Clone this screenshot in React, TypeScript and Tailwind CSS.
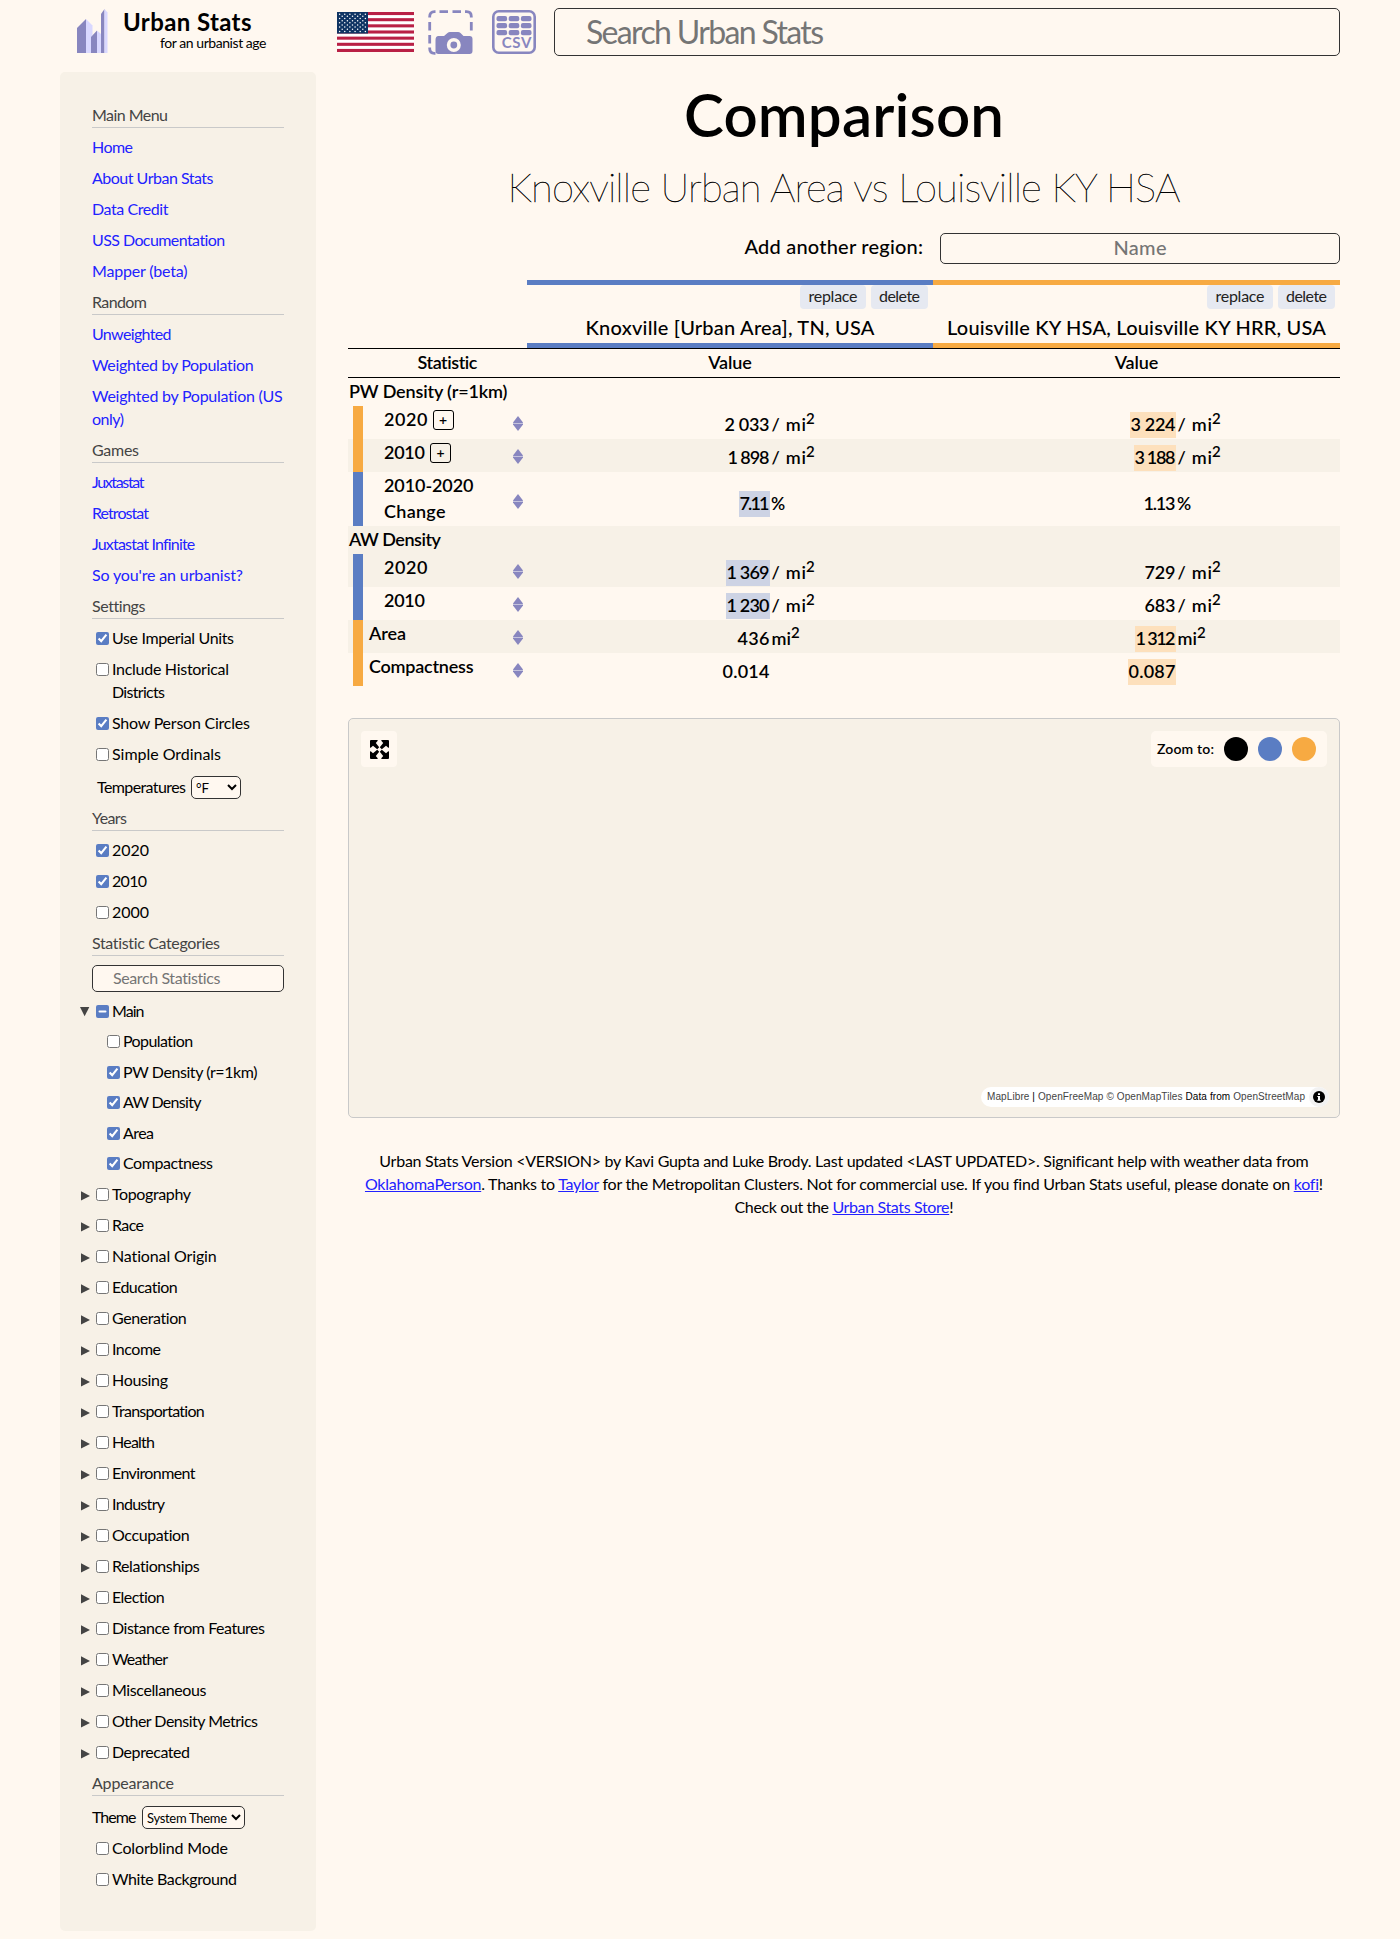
import { useLayoutEffect, useRef } from 'react'
import type { ReactNode } from 'react'

/** Single line of text whose tracking is adjusted so that it spans `w` pixels. */
function Fit({ w, flat = false, className = '', children }: { w: number; flat?: boolean; className?: string; children: ReactNode }) {
  const ref = useRef<HTMLSpanElement>(null)
  useLayoutEffect(() => {
    const el = ref.current
    if (!el) return
    const apply = () => {
      el.style.letterSpacing = '0px'
      el.style.marginRight = '0px'
      const n = (el.textContent ?? '').length
      if (n < 2) return
      const spacing = (w - el.getBoundingClientRect().width) / (n - 1)
      el.style.letterSpacing = `${spacing}px`
      el.style.marginRight = `${-spacing}px`
    }
    apply()
    document.fonts?.ready.then(apply)
  }, [w])
  return (
    <span ref={ref} className={`inline-block whitespace-nowrap ${flat ? '' : '-translate-y-px'} ${className}`}>
      {children}
    </span>
  )
}

function Logo() {
  return (
    <svg width="31" height="44" viewBox="0 0 31 44" className="shrink-0">
      <path d="M0 19 9 10V44H0Z" fill="#8886bf" />
      <path d="M9 10 15.5 16.500V44H9Z" fill="#d9d8ff" />
      <path d="M14 28 20 21.500V44H14Z" fill="#8886bf" />
      <path d="M20 21.500 24 25V44H20Z" fill="#d9d8ff" />
      <path d="M24 5 27.500 0V44H24Z" fill="#8886bf" />
      <path d="M27.500 0 30.500 3.500V44H27.500Z" fill="#d9d8ff" />
    </svg>
  )
}

function Flag() {
  const stars: { x: number; y: number }[] = []
  for (let r = 0; r < 9; r++) {
    const count = r % 2 === 0 ? 6 : 5
    for (let c = 0; c < count; c++) {
      stars.push({ x: (r % 2 === 0 ? 2.6 : 5.2) + c * 5.15, y: 2.2 + r * 2.15 })
    }
  }
  return (
    <svg width="77" height="40" viewBox="0 0 77 40" className="shrink-0">
      <rect width="77" height="40" fill="#fff" />
      {[0, 2, 4, 6, 8, 10, 12].map((i) => (
        <rect key={i} y={(i * 40) / 13} width="77" height={40 / 13} fill="#b92045" />
      ))}
      <rect width="31" height="21.540" fill="#0f3463" />
      {stars.map((s) => (
        <circle key={`${s.x}-${s.y}`} cx={s.x} cy={s.y} r="0.75" fill="#fff" />
      ))}
    </svg>
  )
}

function CameraIcon() {
  return (
    <svg width="45" height="45" viewBox="0 0 45 45" className="shrink-0">
      <g fill="none" stroke="#8886bf" strokeWidth="2.800">
        <path d="M1.700 7.500V6.500Q1.700 1.700 6.500 1.700H7.500" />
        <path d="M37 1.700H38.500Q43.300 1.700 43.300 6.500V7.500" />
        <path d="M11.500 1.700H20M24.500 1.700H33" />
        <path d="M1.700 12V20.500M1.700 25V33.500M43.300 12V20.500" />
        <path d="M1.700 37.500V38.500Q1.700 43.300 6.500 43.300H7.500" />
      </g>
      <path
        d="M7.500 30Q7.500 26 10.500 26H16L19.500 23Q20.500 22 22 22H30Q31.500 22 32.500 23L35.500 26H41.500Q44.500 26 44.500 29V41Q44.500 44 41.500 44H10.500Q7.500 44 7.500 41Z"
        fill="#8886bf"
      />
      <circle cx="25.800" cy="35" r="7" fill="#fff8f0" />
      <circle cx="25.800" cy="35" r="3.400" fill="#8886bf" />
    </svg>
  )
}

function CsvIcon() {
  return (
    <svg width="44" height="44" viewBox="0 0 44 44" className="shrink-0">
      <rect x="1.300" y="1.300" width="41.400" height="41.400" rx="5.500" fill="none" stroke="#8886bf" strokeWidth="2.600" />
      {[6, 13, 20].map((y) =>
        [4.500, 16.700, 28.900].map((x) => (
          <rect key={`${x}-${y}`} x={x} y={y} width="10.600" height="5.200" rx="2" fill="#8886bf" />
        )),
      )}
      <text
        x="9.800"
        y="38"
        textLength="29.500"
        fontSize="15"
        fontWeight="700"
        fontFamily="Lato, sans-serif"
        fill="#8886bf"
      >
        CSV
      </text>
    </svg>
  )
}

function SortIcon() {
  return (
    <svg width="10" height="15" viewBox="0 0 10 15">
      <path d="M5 0 10 6.500V8.500L5 15 0 8.500V6.500Z" fill="#8886bf" />
      <rect y="7" width="10" height="1" fill="#c5c3dd" />
    </svg>
  )
}

function ExpandIcon() {
  return (
    <svg width="19" height="19" viewBox="0 0 19 19" fill="#000">
      {[0, 90, 180, 270].map((a) => (
        <g key={a} transform={`rotate(${a} 9.500 9.500)`}>
          <path d="M1 0H7.200Q8.300 0 7.500 1L5.800 3 9.200 7.200 7.200 9.200 3 5.800 1 7.500Q0 8.300 0 7.200V1Q0 0 1 0Z" />
        </g>
      ))}
    </svg>
  )
}

function Heading({ text, w }: { text: string; w: number }) {
  return (
    <div className="mb-2 h-6 border-b border-[#c9c9c9] leading-[23px] text-[#444444]">
      <Fit w={w}>{text}</Fit>
    </div>
  )
}

function MenuLink({ lines }: { lines: [string, number][] }) {
  return (
    <a href="#" className="mb-2 flex flex-col items-start leading-[23px] text-[#2222ff]">
      {lines.map(([t, w]) => (
        <Fit key={t} w={w}>
          {t}
        </Fit>
      ))}
    </a>
  )
}

type Check = 'on' | 'off' | 'mixed'

function CheckRow({ lines, state = 'off' }: { lines: [string, number][]; state?: Check }) {
  return (
    <label className="flex items-start gap-[3px] pl-1 leading-[23px]">
      <input
        type="checkbox"
        defaultChecked={state === 'on'}
        ref={(el) => {
          if (el) el.indeterminate = state === 'mixed'
        }}
        className="mt-[5px] size-[13px] shrink-0 accent-[#5a7dc3]"
      />
      <span className="flex flex-col items-start">
        {lines.map(([t, w]) => (
          <Fit key={t} w={w}>
            {t}
          </Fit>
        ))}
      </span>
    </label>
  )
}

function Triangle({ open = false }: { open?: boolean }) {
  return (
    <svg width="10" height="10" viewBox="0 0 10 10" className={open ? 'mt-[7px] -ml-[0.500px] mr-[0.500px] shrink-0' : 'mt-2 shrink-0'}>
      <path d={open ? 'M0 0H9.300L4.650 9.300Z' : 'M1 0.200 10 4.900 1 9.600Z'} fill="#444444" />
    </svg>
  )
}

const categories: [string, number][] = [
  ['Topography', 79],
  ['Race', 32],
  ['National Origin', 105],
  ['Education', 66],
  ['Generation', 75],
  ['Income', 49],
  ['Housing', 56],
  ['Transportation', 93],
  ['Health', 43],
  ['Environment', 83.5],
  ['Industry', 53],
  ['Occupation', 78],
  ['Relationships', 88],
  ['Election', 53],
  ['Distance from Features', 153],
  ['Weather', 56],
  ['Miscellaneous', 94.5],
  ['Other Density Metrics', 146],
  ['Deprecated', 78],
]

const mainStats: [string, number, Check][] = [
  ['Population', 70.5, 'off'],
  ['PW Density (r=1km)', 134.5, 'on'],
  ['AW Density', 78.5, 'on'],
  ['Area', 31, 'on'],
  ['Compactness', 90, 'on'],
]

function Sidebar() {
  return (
    <aside className="h-[1859px] w-64 shrink-0 rounded-[5px] bg-[#f7f1e7] px-8 pt-8 text-base">
      <Heading text="Main Menu" w={76} />
      <MenuLink lines={[['Home', 41]]} />
      <MenuLink lines={[['About Urban Stats', 121.5]]} />
      <MenuLink lines={[['Data Credit', 76.5]]} />
      <MenuLink lines={[['USS Documentation', 133.5]]} />
      <MenuLink lines={[['Mapper (beta)', 95.5]]} />
      <Heading text="Random" w={55} />
      <MenuLink lines={[['Unweighted', 79.5]]} />
      <MenuLink lines={[['Weighted by Population', 162]]} />
      <MenuLink
        lines={[
          ['Weighted by Population (US', 191],
          ['only)', 32],
        ]}
      />
      <Heading text="Games" w={47} />
      <MenuLink lines={[['Juxtastat', 52.5]]} />
      <MenuLink lines={[['Retrostat', 57]]} />
      <MenuLink lines={[['Juxtastat Infinite', 103]]} />
      <MenuLink lines={[["So you're an urbanist?", 151]]} />
      <Heading text="Settings" w={53} />
      <div className="flex flex-col gap-2">
        <CheckRow lines={[['Use Imperial Units', 122]]} state="on" />
        <CheckRow
          lines={[
            ['Include Historical', 117],
            ['Districts', 53],
          ]}
        />
        <CheckRow lines={[['Show Person Circles', 138]]} state="on" />
        <CheckRow lines={[['Simple Ordinals', 109]]} />
      </div>
      <div className="mt-2 flex h-[33px] items-start pl-[5px]">
        <Fit w={89} flat className="mt-px leading-[23px]">
          Temperatures
        </Fit>
        <select className="mt-[2px] ml-[5px] h-[23px] w-[50px] rounded-[5px] border border-[#333] bg-[#fff8f0] text-[13.333px]">
          <option>°F</option>
        </select>
      </div>
      <Heading text="Years" w={35} />
      <div className="mb-2 flex flex-col gap-2">
        <CheckRow lines={[['2020', 37]]} state="on" />
        <CheckRow lines={[['2010', 35]]} state="on" />
        <CheckRow lines={[['2000', 37]]} />
      </div>
      <Heading text="Statistic Categories" w={128.5} />
      <div className="mt-[9px] h-[27px] rounded-[5px] border border-[#333] bg-[#fff8f0] pl-5 leading-[24px] text-[#757575]">
        <Fit w={108} flat>
          Search Statistics
        </Fit>
      </div>
      <div className="mt-2 -ml-3 flex">
        <Triangle open />
        <div className="ml-0.5">
          <CheckRow lines={[['Main', 32.5]]} state="mixed" />
        </div>
      </div>
      <div className="mt-[7px] ml-[11px] flex h-[153px] flex-col gap-[7.6px]">
        {mainStats.map(([t, w, s]) => (
          <CheckRow key={t} lines={[[t, w]]} state={s} />
        ))}
      </div>
      <div className="mb-2 -ml-3 flex flex-col gap-2">
        {categories.map(([t, w]) => (
          <div key={t} className="flex">
            <Triangle />
            <div className="ml-0.5">
              <CheckRow lines={[[t, w]]} />
            </div>
          </div>
        ))}
      </div>
      <Heading text="Appearance" w={82} />
      <div className="flex h-[33px] items-start">
        <Fit w={44.5} className="mt-[2px] leading-[23px]">
          Theme
        </Fit>
        <select className="mt-[2px] ml-[5.500px] h-[23px] w-[103px] rounded-[5px] border border-[#333] bg-[#fff8f0] text-[13px] tracking-[-0.300px]">
          <option>System Theme</option>
        </select>
      </div>
      <div className="flex flex-col gap-2">
        <CheckRow lines={[['Colorblind Mode', 116]]} />
        <CheckRow lines={[['White Background', 125]]} />
      </div>
    </aside>
  )
}

type Cell = { n: string; w: number; hl?: boolean; unit?: '/ mi' | 'mi' | '%' }
type Row = { name: [string, number][]; plus?: boolean; indent?: boolean; bar: 'blue' | 'orange'; shade?: boolean; cells: [Cell, Cell] }

const pwRows: Row[] = [
  { name: [['2020', 43.5]], plus: true, indent: true, bar: 'orange', cells: [{ n: '2 033', w: 45, unit: '/ mi' }, { n: '3 224', w: 45, hl: true, unit: '/ mi' }] },
  { name: [['2010', 41]], plus: true, indent: true, bar: 'orange', shade: true, cells: [{ n: '1 898', w: 42, unit: '/ mi' }, { n: '3 188', w: 41, hl: true, unit: '/ mi' }] },
  { name: [['2010-2020', 89.5], ['Change', 61.5]], indent: true, bar: 'blue', cells: [{ n: '7.11', w: 30, hl: true, unit: '%' }, { n: '1.13', w: 32, unit: '%' }] },
]

const awRows: Row[] = [
  { name: [['2020', 43.5]], indent: true, bar: 'blue', shade: true, cells: [{ n: '1 369', w: 43, hl: true, unit: '/ mi' }, { n: '729', w: 31, unit: '/ mi' }] },
  { name: [['2010', 41]], indent: true, bar: 'blue', cells: [{ n: '1 230', w: 43, hl: true, unit: '/ mi' }, { n: '683', w: 31, unit: '/ mi' }] },
  { name: [['Area', 37]], bar: 'orange', shade: true, cells: [{ n: '436', w: 32, unit: 'mi' }, { n: '1 312', w: 40, hl: true, unit: 'mi' }] },
  { name: [['Compactness', 104.5]], bar: 'orange', cells: [{ n: '0.014', w: 47 }, { n: '0.087', w: 47, hl: true }] },
]

const unitWidth = { '/ mi': 34.5, mi: 19.5, '%': 14 }

function ValueCell({ cell, orange }: { cell: Cell; orange?: boolean }) {
  return (
    <div className="flex items-end pb-px">
      <div className="flex w-[243px] justify-end">
        <span className={`h-[26px] px-[0.500px] leading-[26px] ${cell.hl ? (orange ? 'bg-[#fde0bc]' : 'bg-[#cdd3e4]') : ''}`}>
          <Fit w={cell.w}>{cell.n}</Fit>
        </span>
      </div>
      {cell.unit && (
        <span className={`flex h-[26px] leading-[26px] ${cell.unit === '%' ? 'pl-px' : 'pl-[1.500px]'}`}>
          {cell.unit === '%' ? <span className="text-[17.500px]">%</span> : <Fit w={unitWidth[cell.unit]}>{cell.unit}</Fit>}
          {cell.unit !== '%' && <span className="-mt-[7px] text-[15px]">2</span>}
        </span>
      )}
    </div>
  )
}

function StatRow({ row }: { row: Row }) {
  const tall = row.name.length > 1
  return (
    <div
      className={`grid grid-cols-[179px_406px_407px] ${tall ? 'h-[54px]' : 'h-[33px]'} ${row.shade ? 'bg-[#f7f1e7]' : ''}`}
    >
      <div className="flex pl-[5px]">
        <div className={`w-[10px] ${row.bar === 'orange' ? 'bg-[#f7aa42]' : 'bg-[#5a7dc3]'}`} />
        <div className={`flex flex-col pt-px leading-[26px] ${row.indent ? 'ml-[21px]' : 'ml-1.5'} flex-1`}>
          {row.name.map(([t, w]) => (
            <div key={t} className="flex items-center gap-[5px]">
              <Fit w={w}>{t}</Fit>
              {row.plus && (
                <span className="flex h-5 w-[21px] items-center justify-center rounded-[3px] border border-black text-[14px] leading-none">
                  +
                </span>
              )}
            </div>
          ))}
        </div>
        <div className={`mr-1 flex items-center ${tall ? 'pt-[5px]' : 'pt-px'}`}>
          <SortIcon />
        </div>
      </div>
      <div className={`flex ${tall ? 'items-center pt-[11px]' : 'items-end'}`}>
        <ValueCell cell={row.cells[0]} />
      </div>
      <div className={`flex ${tall ? 'items-center pt-[11px]' : 'items-end'}`}>
        <ValueCell cell={row.cells[1]} orange />
      </div>
    </div>
  )
}

function ColumnHead({ title, w, orange }: { title: string; w: number; orange?: boolean }) {
  return (
    <div className={`h-[68px] border-y-[5px] ${orange ? 'border-[#f7aa42]' : 'border-[#5a7dc3]'}`}>
      <div className="flex justify-end gap-[5px] pr-[5px] text-base">
        <button className="flex h-6 w-[66px] items-center justify-center rounded-[4px] bg-[#e6e9f1] font-normal text-[#222]">
          <Fit w={49}>replace</Fit>
        </button>
        <button className="flex h-6 w-[57px] items-center justify-center rounded-[4px] bg-[#e6e9f1] font-normal text-[#222]">
          <Fit w={41}>delete</Fit>
        </button>
      </div>
      <div className="text-center text-xl leading-[38px] font-medium">
        <Fit w={w}>{title}</Fit>
      </div>
    </div>
  )
}

function ComparisonTable() {
  return (
    <section className="mt-4 text-[18px] font-semibold">
      <div className="grid grid-cols-[179px_406px_407px]">
        <div />
        <ColumnHead title="Knoxville [Urban Area], TN, USA" w={289} />
        <ColumnHead title="Louisville KY HSA, Louisville KY HRR, USA" w={379} orange />
      </div>
      <div className="grid h-[30px] grid-cols-[179px_406px_407px] border-y border-black text-center leading-[28px]">
        <div className="pl-5">
          <Fit w={60.5}>Statistic</Fit>
        </div>
        <div>
          <Fit w={43.5}>Value</Fit>
        </div>
        <div>
          <Fit w={43.5}>Value</Fit>
        </div>
      </div>
      <div className="h-7 pl-px leading-[28px]">
        <Fit w={158.5}>PW Density (r=1km)</Fit>
      </div>
      {pwRows.map((r) => (
        <StatRow key={r.name[0][0]} row={r} />
      ))}
      <div className="h-7 bg-[#f7f1e7] pl-px leading-[28px]">
        <Fit w={92}>AW Density</Fit>
      </div>
      {awRows.map((r) => (
        <StatRow key={r.name[0][0]} row={r} />
      ))}
    </section>
  )
}

function MapPanel() {
  return (
    <section className="mt-8 flex h-[400px] flex-col justify-between rounded-[5px] border border-[#c9c9c9] bg-[#f7f1e7] p-3 pb-[10px]">
      <div className="flex justify-between">
        <button className="flex size-9 items-center justify-center rounded-[4px] bg-[#fff8f0]">
          <ExpandIcon />
        </button>
        <div className="flex h-9 items-center gap-[10px] rounded-[5px] bg-[#fff8f0] pr-[11px] pl-1.5">
          <Fit w={57} className="text-[14px] font-semibold">
            Zoom to:
          </Fit>
          <span className="size-6 rounded-full bg-black" />
          <span className="size-6 rounded-full bg-[#5a7dc3]" />
          <span className="size-6 rounded-full bg-[#f7aa42]" />
        </div>
      </div>
      <div className="-mr-[2px] flex h-5 items-center justify-between self-end rounded-full bg-white pl-1.5 font-['Liberation_Sans'] text-[10px] text-[#444]">
        <Fit w={318}>
          MapLibre <span className="text-black">|</span> OpenFreeMap © OpenMapTiles <span className="text-black">Data from</span> OpenStreetMap
        </Fit>
        <span className="ml-1 flex h-5 w-5 items-center justify-center rounded-full bg-[#f2f2f2]">
          <svg width="12" height="12" viewBox="0 0 12 12">
            <circle cx="6" cy="6" r="6" />
            <path d="M5 2.200H7V4H5ZM4.300 5H7V8.800H7.700V9.800H4.300V8.800H5V6H4.300Z" fill="#fff" />
          </svg>
        </span>
      </div>
    </section>
  )
}

function FooterLink({ children }: { children: ReactNode }) {
  return (
    <a href="#" className="text-[#2222ff] underline">
      {children}
    </a>
  )
}

export default function App() {
  return (
    <div className="h-[1939px] w-[1400px] bg-[#fff8f0] pl-[60px] font-[Lato,sans-serif] text-black">
      <header className="flex h-[72px] w-[1280px] items-start">
        <div className="flex w-[277px] pt-[9px] pl-[17px]">
          <Logo />
          <div className="ml-[15px] flex flex-col items-start">
            <Fit w={128.5} flat className="text-[24px] leading-[26px] font-bold">
              Urban Stats
            </Fit>
            <Fit w={106.5} flat className="ml-[37px] text-[14px] leading-[16px]">
              for an urbanist age
            </Fit>
          </div>
        </div>
        <div className="mt-3">
          <Flag />
        </div>
        <div className="mt-[10px] ml-[14px]">
          <CameraIcon />
        </div>
        <div className="mt-[10px] ml-[19px]">
          <CsvIcon />
        </div>
        <div className="mt-2 ml-[18px] h-12 flex-1 rounded-[5px] border border-[#333] pl-[31px] text-[32px] leading-[46px] text-[#757575]">
          <Fit w={238} flat>
            Search Urban Stats
          </Fit>
        </div>
      </header>
      <div className="flex">
        <Sidebar />
        <main className="ml-8 w-[992px]">
          <h1 className="text-center text-[60px] leading-[86px] font-semibold">
            <Fit w={320}>Comparison</Fit>
          </h1>
          <h2 className="text-center text-[40px] leading-[58px] font-extralight [-webkit-text-stroke:0.4px_black]">
            <Fit w={673} flat>
              Knoxville Urban Area vs Louisville KY HSA
            </Fit>
          </h2>
          <div className="mt-[17px] flex h-[31px] justify-end text-xl font-medium">
            <Fit w={178.5} className="leading-[29px]">
              Add another region:
            </Fit>
            <div className="ml-[17px] w-[400px] rounded-[5px] border border-[#333] text-center leading-[29px] text-[#757575]">
              <Fit w={53}>Name</Fit>
            </div>
          </div>
          <ComparisonTable />
          <MapPanel />
          <footer className="mt-8 flex flex-col items-center leading-[23px]">
            <Fit w={929}>
              {'Urban Stats Version <VERSION> by Kavi Gupta and Luke Brody. Last updated <LAST UPDATED>. Significant help with weather data from'}
            </Fit>
            <Fit w={957.5}>
              <FooterLink>OklahomaPerson</FooterLink>. Thanks to <FooterLink>Taylor</FooterLink> for the Metropolitan Clusters. Not for
              commercial use. If you find Urban Stats useful, please donate on <FooterLink>kofi</FooterLink>!
            </Fit>
            <Fit w={219}>
              Check out the <FooterLink>Urban Stats Store</FooterLink>!
            </Fit>
          </footer>
        </main>
      </div>
    </div>
  )
}
